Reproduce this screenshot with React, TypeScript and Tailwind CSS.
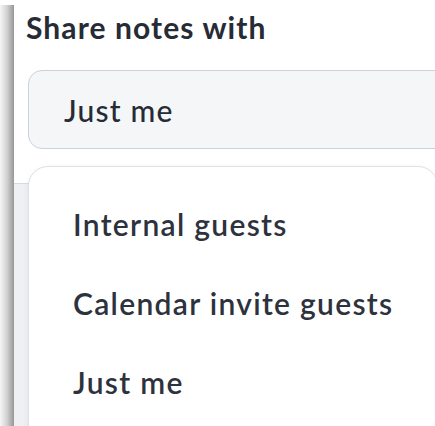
const OPTIONS = ['Internal guests', 'Calendar invite guests', 'Just me'];

export default function App() {
  return (
    <div className="relative flex h-[426px] w-[435px] overflow-hidden bg-white font-['Lato','Liberation_Sans',sans-serif] text-[#262b35]">
      {/* side panel shadow */}
      <div className="mt-[5px] w-[14px] shrink-0 bg-gradient-to-r from-[#f6f6f6] via-[#d2d2d2] to-[#979797]" />

      <div className="flex min-w-0 flex-1 flex-col pl-[14px] pt-[9px]">
        <h2 className="-ml-[2px] text-[30px] font-bold leading-[36px] tracking-[1.1px]">Share notes with</h2>

        <div className="mt-[25px] flex h-[79px] w-[440px] shrink-0 items-center rounded-[14px] border border-[#cdd1da] bg-[#f5f6f8] pl-[35px]">
          <span className="text-[30px] font-medium leading-[36px] tracking-[1.2px]">Just me</span>
        </div>

        {/* content sitting under the open menu */}
        <div className="-ml-[14px] mt-[34px] flex-1 border-t border-[#d6d9e0] bg-[#eef0f4]" />
      </div>

      {/* open dropdown */}
      <div className="absolute left-[28px] top-[166px] h-[300px] w-[410px] rounded-[20px] border border-[#dde0e7] bg-white pl-[44px] pt-[39px] shadow-[0_2px_6px_rgba(30,40,60,0.06)]">
        <ul className="flex flex-col gap-[43px]">
          {OPTIONS.map(o => (
            <li key={o} className="text-[30px] font-semibold leading-[36px] tracking-[1.3px] text-[#2d323d]">{o}</li>
          ))}
        </ul>
      </div>
    </div>
  );
}
